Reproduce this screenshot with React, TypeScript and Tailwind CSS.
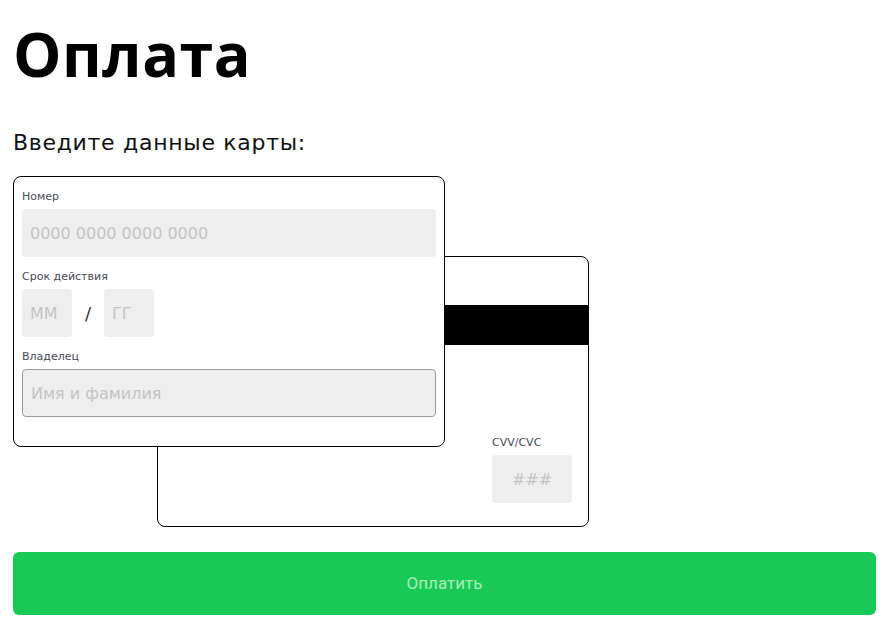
import React from "react";

const body = { fontFamily: '"DejaVu Sans", "Open Sans", sans-serif' };

function Field({
  label,
  placeholder,
  focused = false,
}: {
  label: string;
  placeholder: string;
  focused?: boolean;
}) {
  return (
    <div className="flex flex-col">
      <span className="text-[11px] leading-[24px] text-[#4a4a55]">{label}</span>
      <input
        placeholder={placeholder}
        autoFocus={focused}
        className={`h-12 w-full rounded bg-[#eeeeee] px-2 text-[16px] text-[#333] caret-black placeholder:text-[#c4c4c4] outline-none ${
          focused ? "border border-[#9a9a9a]" : ""
        }`}
      />
    </div>
  );
}

export default function App() {
  return (
    <div className="min-h-screen bg-white pl-[13px] pr-[15px] pt-[14px]" style={body}>
      <h1
        className="text-[61px] font-bold leading-[80px] tracking-[0.5px] text-black"
        style={{ fontFamily: '"Open Sans", sans-serif' }}
      >
        Оплата
      </h1>

      <p className="mt-[34px] text-[22px] leading-[30px] tracking-[0.7px] text-[#111]">
        Введите данные карты:
      </p>

      <div className="mt-[18px] grid">
        {/* back side */}
        <div className="col-start-1 row-start-1 ml-[144px] mt-[80px] flex h-[271px] w-[432px] flex-col rounded-lg border border-black">
          <div className="mt-[48px] h-10 bg-black" />
          <div className="mt-auto mb-[23px] ml-auto mr-[16px] flex w-20 flex-col">
            <span className="text-[11px] leading-[24px] text-[#4a4a55]">CVV/CVC</span>
            <input
              placeholder="###"
              className="h-12 w-20 rounded bg-[#eeeeee] text-center text-[16px] placeholder:text-[#c4c4c4] outline-none"
            />
          </div>
        </div>

        {/* front side */}
        <div className="z-10 col-start-1 row-start-1 flex h-[271px] w-[432px] flex-col gap-2 self-start rounded-lg border border-black bg-white px-[8px] pt-[8px]">
          <Field label="Номер" placeholder="0000 0000 0000 0000" />
          <div className="flex flex-col">
            <span className="text-[11px] leading-[24px] text-[#4a4a55]">Срок действия</span>
            <div className="flex items-center">
              <input
                placeholder="MM"
                className="h-12 w-[50px] rounded bg-[#eeeeee] px-2 text-[16px] placeholder:text-[#c4c4c4] outline-none"
              />
              <span className="w-8 text-center text-[18px] text-[#333]">/</span>
              <input
                placeholder="ГГ"
                className="h-12 w-[50px] rounded bg-[#eeeeee] px-2 text-[16px] placeholder:text-[#c4c4c4] outline-none"
              />
            </div>
          </div>
          <Field label="Владелец" placeholder="Имя и фамилия" focused />
        </div>
      </div>

      <button
        className="mt-[25px] flex h-[63px] w-full items-center justify-center rounded-md bg-[#18ca55] text-[17px] text-[#a9ecbb]"
        style={{ fontFamily: "Roboto, sans-serif" }}
      >
        Оплатить
      </button>
    </div>
  );
}
